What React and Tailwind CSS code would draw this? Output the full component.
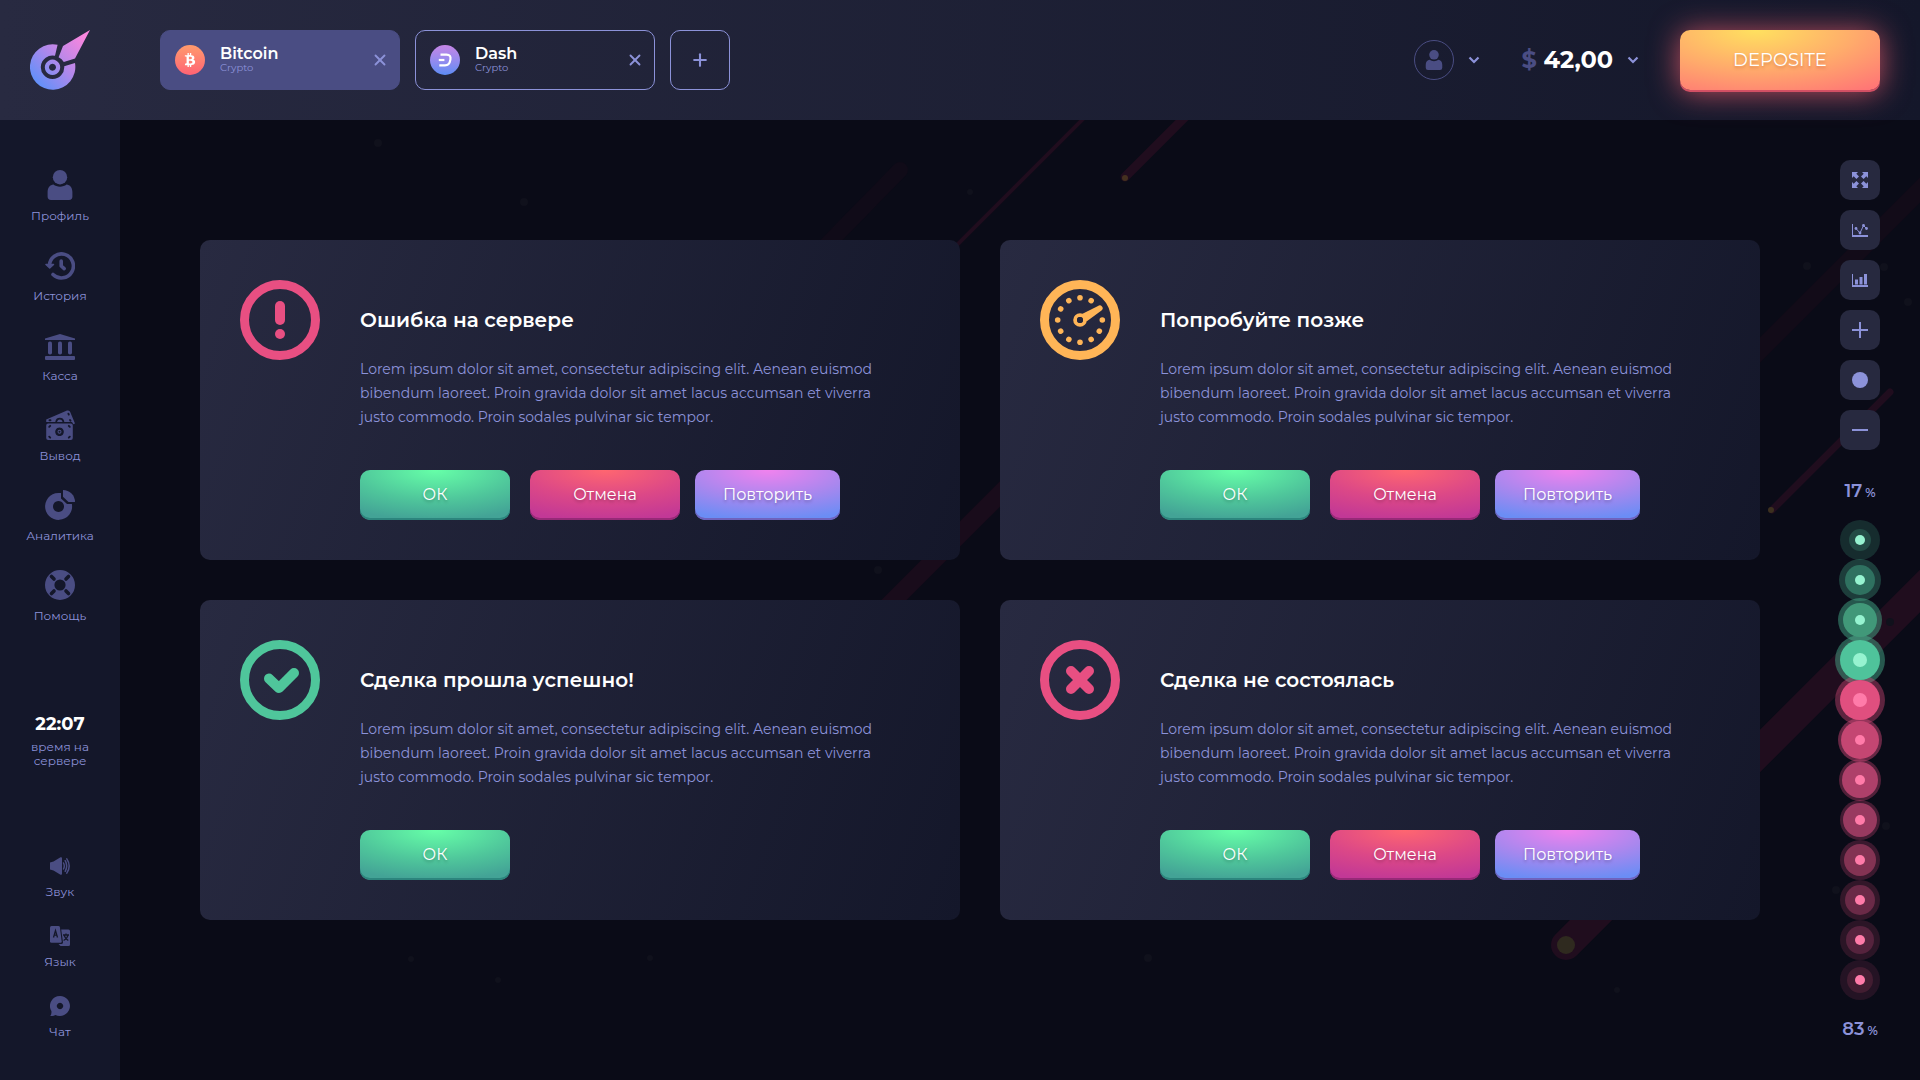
import { useState } from "react";
import { FaBtc } from "react-icons/fa";
import { FiX, FiPlus } from "react-icons/fi";

const LOREM =
  "Lorem ipsum dolor sit amet, consectetur adipiscing elit. Aenean euismod bibendum laoreet. Proin gravida dolor sit amet lacus accumsan et viverra justo commodo. Proin sodales pulvinar sic tempor.";

const cards = [
  { id: 1, title: "Ошибка на сервере", icon: "error", actions: ["ok", "cancel", "retry"] },
  { id: 2, title: "Попробуйте позже", icon: "later", actions: ["ok", "cancel", "retry"] },
  { id: 3, title: "Сделка прошла успешно!", icon: "success", actions: ["ok"] },
  { id: 4, title: "Сделка не состоялась", icon: "failed", actions: ["ok", "cancel", "retry"] },
];

const actionButtons = {
  ok: {
    label: "ОК",
    style:
      "w-[150px] bg-[radial-gradient(ellipse_90%_100%_at_50%_0%,#66ffa8_0%,#4fc69b_60%,#43a396_100%)] shadow-[inset_0_-2px_0_#2c857d]",
  },
  cancel: {
    label: "Отмена",
    style:
      "ml-5 w-[150px] bg-[radial-gradient(ellipse_100%_100%_at_50%_0%,#ff6670_0%,#dc4887_55%,#c23896_100%)] shadow-[inset_0_-2px_0_#962a77]",
  },
  retry: {
    label: "Повторить",
    style:
      "ml-[15px] w-[145px] bg-[radial-gradient(ellipse_100%_100%_at_50%_0%,#f182ee_0%,#a987ee_55%,#6b8df5_100%)] shadow-[inset_0_-2px_0_#6f62bd]",
  },
};

// outer radius, outer opacity, inner radius, inner color, dot radius
const greenDots = [
  [20, 0.18, 11, "#234b45", 5],
  [21, 0.28, 15, "#2f7160", 5],
  [22, 0.42, 17, "#419879", 5],
  [25, 0.42, 20, "#4fc39b", 7],
];
const redDots = [
  [25, 0.38, 20, "#e04f7f", 7],
  [22, 0.42, 19, "#c44672", 5],
  [21, 0.32, 18, "#ae406a", 5],
  [20, 0.26, 17, "#983a60", 5],
  [20, 0.22, 16, "#833353", 5],
  [20, 0.18, 15, "#6a2a47", 5],
  [20, 0.15, 14, "#55233d", 5],
  [20, 0.12, 13, "#421d31", 5],
];

const Logo = () => (
  <svg viewBox="0 0 60 60" className="size-[60px]" aria-hidden="true">
    <defs>
      <linearGradient id="logo" gradientUnits="userSpaceOnUse" x1="4" y1="54" x2="54" y2="6">
        <stop offset="0" stopColor="#5c91fa" />
        <stop offset="0.5" stopColor="#b488ea" />
        <stop offset="1" stopColor="#fb86de" />
      </linearGradient>
    </defs>
    <g fill="url(#logo)">
      <path d="M27.6 14.8A22.7 22.7 0 1 0 45 33L34.2 36.2A11.7 11.7 0 1 1 25 25.8Z" />
      <path d="M60 0L33 16L28.6 27.2Q32 28.6 33.8 32L45 28.4Z" />
      <path fillRule="evenodd" d="M22.5 29.6a7.7 7.7 0 1 0 .01 0ZM22.5 33.8a3.5 3.5 0 1 1-.01 0Z" />
    </g>
  </svg>
);

const UserIcon = ({ className }) => (
  <svg viewBox="0 0 30 30" className={className} fill="currentColor" aria-hidden="true">
    <circle cx="15" cy="7.2" r="7.2" />
    <path d="M8.5 14.6C5 14.8 2.6 18 2.6 22v4.6A3.4 3.4 0 0 0 6 30h18a3.4 3.4 0 0 0 3.4-3.4V22c0-4-2.4-7.2-5.9-7.4-1.600 1.300-4 2.200-6.500 2.200s-4.900-.9-6.500-2.200Z" />
  </svg>
);

const HistoryIcon = ({ className }) => (
  <svg viewBox="0 0 30 30" className={className} fill="none" stroke="currentColor" aria-hidden="true">
    <path d="M4.4 15.500A12 12 0 1 1 8 24.500" strokeWidth="3.600" strokeLinecap="round" />
    <path d="M1 14.500h7.500l-3.800 3.500Z" fill="currentColor" strokeWidth="1.500" strokeLinejoin="round" />
    <path d="M16.200 11v5l3 2.600" strokeWidth="3.600" strokeLinecap="round" strokeLinejoin="round" />
  </svg>
);

const BankIcon = ({ className }) => (
  <svg viewBox="0 0 30 30" className={className} fill="currentColor" aria-hidden="true">
    <path d="M15 4L30 8.500V10H0V8.500Z" />
    <rect x="3" y="11.500" width="4" height="13" rx="1.800" />
    <rect x="13" y="11.500" width="4" height="13" rx="1.800" />
    <rect x="23" y="11.500" width="4" height="13" rx="1.800" />
    <rect x="0" y="26" width="30" height="4" rx="1" />
  </svg>
);

const CashIcon = ({ className }) => (
  <svg viewBox="0 0 30 30" className={className} fill="currentColor" aria-hidden="true">
    <path d="M1.200 9.500L22 .600Q24.400-.200 25.200 2L30 13.600L28.300 14.300L27 12H1.200Z" />
    <path
      fillRule="evenodd"
      d="M3.200 13.600h22.600a2 2 0 0 1 2 2V28a2 2 0 0 1-2 2H3.200a2 2 0 0 1-2-2V15.600a2 2 0 0 1 2-2ZM14.500 17.500a4.300 4.300 0 1 0 .01 0Z"
    />
    <g stroke="#14172a" strokeWidth="1.900" fill="none" strokeLinecap="round">
      <path d="M11.300 11.400a3.600 3.600 0 0 1 7 0" />
      <path d="M4.200 16.800l1-1M24.800 16.800l-1-1M4.200 26.700l1 1M24.800 26.700l-1 1M23.400 3.700l.4.900M4.500 10.300h1M25 10l.5.800" />
    </g>
    <circle cx="14.500" cy="21.800" r="2" />
    <circle cx="14.500" cy="21.800" r="1" fill="#14172a" />
  </svg>
);

const PieIcon = ({ className }) => (
  <svg viewBox="0 0 30 30" className={className} fill="currentColor" aria-hidden="true">
    <path
      fillRule="evenodd"
      d="M16 3.100A13.500 13.500 0 1 0 26.900 14H22L16 8.500ZM13.500 11a5.500 5.500 0 1 0 .01 0Z"
    />
    <path d="M18 0A12 12 0 0 1 30 12H23.500L18 6.800Z" />
  </svg>
);

const HelpIcon = ({ className }) => (
  <svg viewBox="0 0 30 30" className={className} fill="none" aria-hidden="true">
    <circle cx="15" cy="15" r="10.300" stroke="currentColor" strokeWidth="9.400" />
    <path
      d="M6.500 6.500l2.500 2.500M23.500 6.500l-2.500 2.500M6.500 23.500l2.500-2.500M23.500 23.500l-2.500-2.500"
      stroke="#14172a"
      strokeWidth="3.600"
      strokeLinecap="round"
    />
  </svg>
);

const SoundIcon = ({ className }) => (
  <svg viewBox="0 0 20 20" className={className} fill="none" stroke="currentColor" aria-hidden="true">
    <path d="M0 6.500L3.500 5.500L10.500 1.300Q12 .700 12 2.300V17.700Q12 19.300 10.500 18.700L3.500 14.500L0 13.500Z" fill="currentColor" stroke="none" />
    <path d="M13.500 7q1.600 3 0 6M15.200 4.700q3 5.300 0 10.600M16.800 2.800q4.800 7.200 0 14.400" strokeWidth="1.500" strokeLinecap="round" />
  </svg>
);

const LanguageIcon = ({ className }) => (
  <svg viewBox="0 0 20 20" className={className} fill="currentColor" aria-hidden="true">
    <path d="M1.500 0H8.500Q9.700 0 9.900 1.200L11.700 15.500Q11.800 16.800 10.500 16.800H1.500Q0 16.800 0 15.300V1.500Q0 0 1.500 0Z" />
    <path d="M11.200 3.400H18.500Q20 3.400 20 4.900V18.500Q20 20 18.500 20H10.500L8.500 18H11.500Q13.200 18 13 16.200Z" />
    <g stroke="#14172a" strokeWidth="1.300" fill="none">
      <path d="M3.500 11.500L5.500 4.500L7.500 11.500M4.200 9.200h2.600" />
      <path d="M13 9h6M16 7.500V9M18 9q-.6 3.600-4.400 5.500M14.300 9.800q1 3 4 4.700" />
    </g>
  </svg>
);

const ChatIcon = ({ className }) => (
  <svg viewBox="0 0 20 20" className={className} fill="currentColor" aria-hidden="true">
    <path
      fillRule="evenodd"
      d="M10 0a10 10 0 1 1-4.600 18.900Q3 20.300.300 20Q1.800 17.800 1.400 15.100A10 10 0 0 1 10 0ZM10 6.800a3.200 3.200 0 1 0 .01 0Z"
    />
  </svg>
);

const ChevronIcon = ({ className }) => (
  <svg viewBox="0 0 12 8" className={className} fill="none" aria-hidden="true">
    <path d="M1.500 1.500L6 6L10.500 1.500" stroke="currentColor" strokeWidth="2.200" />
  </svg>
);

const DashIcon = () => (
  <svg viewBox="0 0 16 16" className="size-4" fill="none" stroke="#fff" strokeWidth="2.200" aria-hidden="true">
    <path d="M3.500 2.600h6Q14.300 2.600 13.400 7.600Q12.500 13.400 8 13.400H2.300" strokeLinejoin="round" />
    <path d="M1.800 8h5.600" />
  </svg>
);

const StatusIcon = ({ type }) => {
  const color = { error: "#e84f82", later: "#ffb557", success: "#4fc69b", failed: "#e84f82" }[type];
  const ticks = [0, 30, 90, 120, 150, 180, 210, 240, 270, 300, 330];

  return (
    <svg viewBox="-40 -40 80 80" className="size-20 shrink-0" fill="none" stroke={color} strokeLinecap="round" aria-hidden="true">
      <circle r="35.500" strokeWidth="9" />
      {type === "error" && (
        <>
          <path d="M0-14V0" strokeWidth="10" />
          <circle cy="14" r="5" fill={color} stroke="none" />
        </>
      )}
      {type === "later" && (
        <>
          {ticks.map((deg) => (
            <circle key={deg} cy="-22.300" r="2.800" fill={color} stroke="none" transform={`rotate(${deg})`} />
          ))}
          <circle r="4.900" strokeWidth="3.800" />
          <path d="M2.500-6.300L18-14A2.800 2.800 0 0 1 21.500-9.500L6.500 1.500Z" fill={color} stroke="none" />
          <circle r="3" fill="#24263c" stroke="none" />
        </>
      )}
      {type === "success" && <path d="M-11-1.500L-1 8L14-7" strokeWidth="10" strokeLinejoin="round" />}
      {type === "failed" && <path d="M-9-9L9 9M9-9L-9 9" strokeWidth="10" />}
    </svg>
  );
};

// Falling stars behind the page
const Background = () => (
  <svg
    viewBox="0 0 1800 960"
    preserveAspectRatio="xMaxYMin slice"
    className="absolute inset-0 size-full"
    strokeLinecap="round"
    aria-hidden="true"
  >
    <g stroke="#200d1e">
      <path d="M1005 57L1072-10" strokeWidth="9" />
      <path d="M826 136L972-10" strokeWidth="4" />
      <path d="M1652 390L1770 272" strokeWidth="7" />
      <path d="M1446 825L1830 441" strokeWidth="30" />
    </g>
    <path d="M600 234L780 50" stroke="#100b18" strokeWidth="16" />
    <path d="M740 514L960 294" stroke="#190c1b" strokeWidth="18" />
    <path d="M1600 270L1830 40" stroke="#120b18" strokeWidth="18" />
    <g fill="#2f2a1f">
      <circle cx="1005" cy="58" r="3" fill="#44301f" />
      <circle cx="1651" cy="390" r="3" fill="#3c301f" />
      <circle cx="1446" cy="825" r="9" />
    </g>
    <g fill="#10111c">
      <circle cx="1687" cy="146" r="4" />
      <circle cx="1764" cy="147" r="4" />
      <circle cx="1788" cy="182" r="4" />
      <circle cx="1770" cy="502" r="4" />
      <circle cx="1716" cy="770" r="4" />
      <circle cx="1766" cy="706" r="4" />
      <circle cx="758" cy="450" r="4" />
      <circle cx="530" cy="838" r="3" />
      <circle cx="291" cy="839" r="3" />
      <circle cx="378" cy="860" r="3" />
      <circle cx="1028" cy="838" r="4" />
      <circle cx="1497" cy="870" r="3" />
      <circle cx="404" cy="82" r="4" />
      <circle cx="258" cy="23" r="4" />
      <circle cx="850" cy="72" r="3" />
    </g>
  </svg>
);

const mainNav = [
  { name: "Профиль", Icon: UserIcon },
  { name: "История", Icon: HistoryIcon },
  { name: "Касса", Icon: BankIcon },
  { name: "Вывод", Icon: CashIcon },
  { name: "Аналитика", Icon: PieIcon },
  { name: "Помощь", Icon: HelpIcon },
];

const bottomNav = [
  { name: "Звук", Icon: SoundIcon },
  { name: "Язык", Icon: LanguageIcon },
  { name: "Чат", Icon: ChatIcon },
];

const NavList = ({ items, iconClass }) => (
  <ul className="flex flex-col items-center gap-[26px]">
    {items.map(({ name, Icon }) => (
      <li key={name}>
        <a href="#" className="flex flex-col items-center gap-2 text-xs leading-4 text-[#8c92d9]">
          <Icon className={`${iconClass} text-[#4a4d83]`} />
          {name}
        </a>
      </li>
    ))}
  </ul>
);

const Sidebar = () => (
  <aside className="flex w-[120px] shrink-0 flex-col justify-between bg-[#14172a] pt-[50px] pb-10">
    <nav aria-label="Меню">
      <NavList items={mainNav} iconClass="size-[30px]" />
    </nav>
    <div className="text-center">
      <p className="text-lg leading-6 font-bold text-white">22:07</p>
      <p className="mt-1 text-xs leading-[14px] text-[#8c92d9]">
        время на
        <br />
        сервере
      </p>
    </div>
    <nav aria-label="Настройки">
      <NavList items={bottomNav} iconClass="size-5" />
    </nav>
  </aside>
);

const CoinTab = ({ name, active, icon, iconStyle, onSelect }) => (
  <div
    className={`flex h-[60px] w-60 items-center rounded-[10px] border pr-2.5 pl-3.5 ${
      active ? "border-[#4a4d83] bg-[#4a4d83]" : "border-[#8c92d9]"
    }`}
  >
    <button onClick={onSelect} className="flex flex-1 items-center gap-[15px] text-left">
      <span className={`flex size-[30px] items-center justify-center rounded-full text-white ${iconStyle}`}>{icon}</span>
      <span>
        <span className="block text-base leading-4 font-semibold text-white">{name}</span>
        <span className="block text-[10px] leading-3 text-[#8c92d9]">Crypto</span>
      </span>
    </button>
    <button aria-label={`Закрыть ${name}`} className="text-[#8c92d9]">
      <FiX className="size-[18px]" strokeWidth={2.5} />
    </button>
  </div>
);

const Header = () => {
  const [tab, setTab] = useState("Bitcoin");

  return (
    <header className="relative flex h-[120px] items-center bg-linear-to-r from-[#282a41] to-[#14172a] pr-10">
      <a href="#" aria-label="Главная" className="flex w-[120px] justify-center">
        <Logo />
      </a>
      <div className="ml-10 flex gap-[15px]">
        <CoinTab
          name="Bitcoin"
          active={tab === "Bitcoin"}
          onSelect={() => setTab("Bitcoin")}
          icon={<FaBtc className="size-3.5" />}
          iconStyle="bg-linear-to-b from-[#ff9a6c] to-[#ff6274]"
        />
        <CoinTab
          name="Dash"
          active={tab === "Dash"}
          onSelect={() => setTab("Dash")}
          icon={<DashIcon />}
          iconStyle="bg-linear-to-b from-[#c585e6] to-[#5b8cf5]"
        />
        <button
          aria-label="Добавить"
          className="flex h-[60px] w-[60px] items-center justify-center rounded-[10px] border border-[#8c92d9] text-[#8c92d9]"
        >
          <FiPlus className="size-5" strokeWidth={2.5} />
        </button>
      </div>

      <div className="ml-auto flex items-center gap-[41px]">
        <button aria-label="Аккаунт" className="flex items-center gap-3.5">
          <span className="flex size-10 items-center justify-center rounded-full border border-[#4a4d83] text-[#4a4d83]">
            <UserIcon className="size-5" />
          </span>
          <ChevronIcon className="w-3 text-[#8c92d9]" />
        </button>
        <button className="flex items-center gap-3.5 text-2xl font-bold text-white">
          <span>
            <span className="text-[#4a4d83]">$</span> 42,00
          </span>
          <ChevronIcon className="w-3 text-[#8c92d9]" />
        </button>
        <button className="h-[60px] w-[200px] rounded-[10px] bg-[radial-gradient(ellipse_100%_130%_at_38%_0%,#ffe15f_0%,#ffab6b_50%,#ff6f77_100%)] text-lg text-white shadow-[0_2px_0_#d25064,0_2px_30px_rgba(255,100,115,0.75)] text-shadow-[0_2px_3px_rgba(160,60,40,0.35)]">
          DEPOSITE
        </button>
      </div>
    </header>
  );
};

const Card = ({ card }) => (
  <section className="flex gap-10 rounded-[10px] bg-linear-[110deg] from-[#282a41] to-[#14172a] p-10">
    <StatusIcon type={card.icon} />
    <div className="pt-7">
      <h2 className="text-xl leading-6 font-semibold text-white">{card.title}</h2>
      <p className="mt-[25px] max-w-[520px] text-sm leading-6 text-[#8c92d9]">{LOREM}</p>
      <div className="mt-[41px] flex">
        {card.actions.map((action) => (
          <button
            key={action}
            className={`h-[50px] rounded-[10px] text-base text-white text-shadow-[0_2px_3px_rgba(0,0,0,0.25)] ${actionButtons[action].style}`}
          >
            {actionButtons[action].label}
          </button>
        ))}
      </div>
    </div>
  </section>
);

const tools = [
  {
    name: "На весь экран",
    icon: (
      <path d="M0 0H6L4.300 1.700L7 4.400L4.400 7L1.700 4.300L0 6ZM16 0V6L14.300 4.300L11.600 7L9 4.400L11.700 1.700L10 0ZM0 16V10L1.700 11.700L4.400 9L7 11.600L4.300 14.300L6 16ZM16 16H10L11.700 14.300L9 11.600L11.600 9L14.300 11.700L16 10Z" />
    ),
  },
  {
    name: "Линейный график",
    icon: (
      <>
        <path d="M0 2H1V13H16V15H0Z" />
        <path d="M4 6.500L8 11L11.500 3.500L14.500 6.500" fill="none" stroke="currentColor" strokeWidth="1" />
        <circle cx="4" cy="6.500" r="1.400" />
        <circle cx="8" cy="11" r="1.400" />
        <circle cx="11.500" cy="3.500" r="1.400" />
        <circle cx="14.500" cy="6.500" r="1.400" />
      </>
    ),
  },
  { name: "Столбчатый график", icon: <path d="M0 2H1V13H16V15H0ZM3 7.500H6V12.500H3ZM7.500 5H10.500V12.500H7.500ZM12 2H15V12.500H12Z" /> },
  { name: "Увеличить", icon: <path d="M7 0H9V7H16V9H9V16H7V9H0V7H7Z" /> },
  { name: "Сбросить", icon: <circle cx="8" cy="8" r="8" /> },
  { name: "Уменьшить", icon: <path d="M0 7H16V9H0Z" /> },
];

const Toolbar = () => {
  const dots = [
    ...greenDots.map((d) => ({ d, base: "#4fc39b", dot: "#96f3d0" })),
    ...redDots.map((d) => ({ d, base: "#e84f82", dot: "#ff7ba9" })),
  ];

  return (
    <div className="flex w-10 shrink-0 flex-col items-center">
      <div className="flex flex-col gap-2.5">
        {tools.map((tool) => (
          <button
            key={tool.name}
            aria-label={tool.name}
            className="flex size-10 items-center justify-center rounded-[10px] bg-[#27293f] text-[#8c92d9]"
          >
            <svg viewBox="0 0 16 16" className="size-4" fill="currentColor" aria-hidden="true">
              {tool.icon}
            </svg>
          </button>
        ))}
      </div>
      <p className="mt-[29px] text-lg leading-6 font-semibold whitespace-nowrap text-[#8c92d9]">
        17 <span className="-ml-0.5 text-xs">%</span>
      </p>
      <svg viewBox="0 0 50 490" className="mt-3 w-[50px]" aria-hidden="true">
        {dots.map(({ d, base }, i) => (
          <circle key={i} cx="25" cy={25 + i * 40} r={d[0]} fill={base} opacity={d[1]} />
        ))}
        {dots.map(({ d, dot }, i) => (
          <g key={i}>
            <circle cx="25" cy={25 + i * 40} r={d[2]} fill={d[3]} />
            <circle cx="25" cy={25 + i * 40} r={d[4]} fill={dot} />
          </g>
        ))}
      </svg>
      <p className="mt-3 text-lg leading-6 font-semibold whitespace-nowrap text-[#8c92d9]">
        83 <span className="-ml-0.5 text-xs">%</span>
      </p>
    </div>
  );
};

export default function App() {
  return (
    <div className="flex min-h-screen flex-col bg-[#0a0b17] font-['Montserrat','Inter',sans-serif]">
      <Header />
      <div className="flex flex-1">
        <Sidebar />
        <div className="relative flex-1 overflow-hidden">
          <Background />
          <div className="relative flex gap-20 pt-10 pr-10 pb-8 pl-20">
            <main className="mt-20 grid flex-1 grid-cols-2 content-start gap-10">
              {cards.map((card) => (
                <Card key={card.id} card={card} />
              ))}
            </main>
            <Toolbar />
          </div>
        </div>
      </div>
    </div>
  );
}
